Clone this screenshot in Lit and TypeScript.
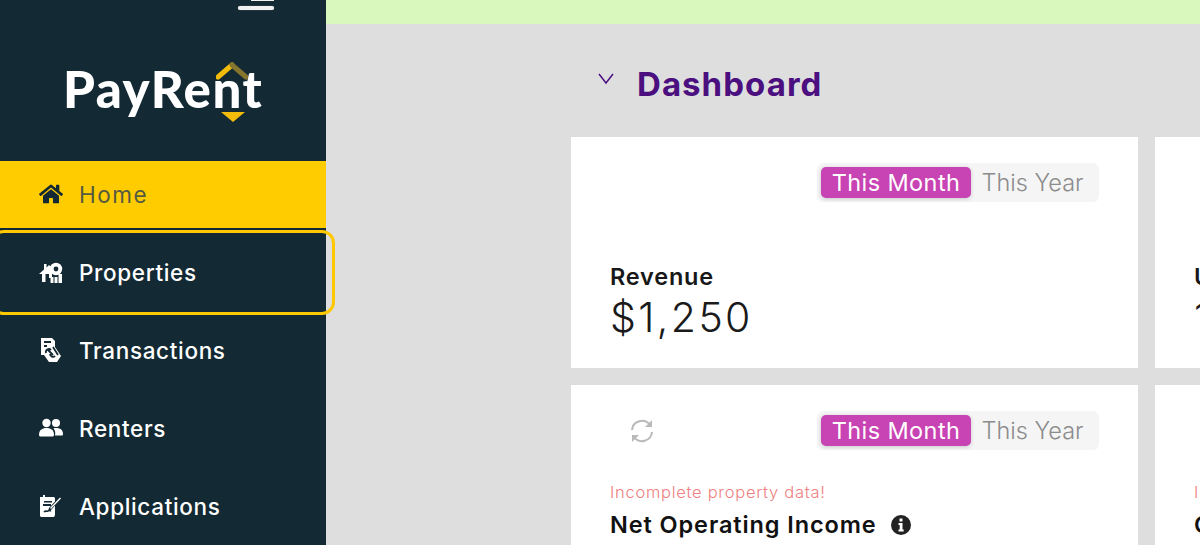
import { LitElement, html, css } from "lit";
import { customElement } from "lit/decorators.js";

const homeIcon = html`<svg class="ico" viewBox="0 0 576 512"><path fill="#132933" d="M280.37 148.26L96 300.11V464a16 16 0 0 0 16 16l112.06-.29a16 16 0 0 0 15.92-16V368a16 16 0 0 1 16-16h64a16 16 0 0 1 16 16v95.64a16 16 0 0 0 16 16.05L464 480a16 16 0 0 0 16-16V300L295.67 148.26a12.19 12.19 0 0 0-15.3 0zM571.6 251.47L488 182.56V44.05a12 12 0 0 0-12-12h-56a12 12 0 0 0-12 12v72.61L318.47 43a48 48 0 0 0-61 0L4.34 251.47a12 12 0 0 0-1.6 16.9l25.5 31A12 12 0 0 0 45.15 301l235.22-193.74a12.19 12.19 0 0 1 15.3 0L530.9 301a12 12 0 0 0 16.9-1.6l25.5-31a12 12 0 0 0-1.7-16.93z"/></svg>`;
const propIcon = html`<svg class="ico" viewBox="0 0 24 24"><path fill="#fff" d="M0 14 L5 9.500 V4 h2.500 v3.500 L10 5 l3 3 v10 H10 v-4 H6.500 v8 H3 v-8 H0z"/><circle cx="17" cy="9" r="6.200" fill="#fff"/><circle cx="17" cy="9" r="2.400" fill="#132933"/><path fill="#fff" d="M11.500 17h3v6h-3zM15.500 17h3v6h-3zM19.500 14h3.500v9h-3.500z"/></svg>`;
const txIcon = html`<svg class="ico" viewBox="0 0 24 24"><path fill="#fff" d="M2 0 h11 l3 3 v6 l6 9 -4 6 H10 L5 17 H2z"/><path fill="none" stroke="#132933" stroke-width="1.800" d="M5 4h7M5 8h3M9 12l5 5M7 15a3 3 0 0 1 5-3M16 18a3 3 0 0 1-5-2M14 9l5 8"/></svg>`;
const usersIcon = html`<svg class="ico" viewBox="0 0 24 24"><circle cx="7.500" cy="7" r="4.200" fill="#fff"/><circle cx="17" cy="7" r="4" fill="#fff"/><path fill="#fff" d="M0 19c0-5 3-7 7.500-7s7.500 2 7.500 7c0 1-1 1.500-2 1.500H2c-1 0-2-.5-2-1.500z"/><path fill="#fff" d="M16 19.500h7c.6 0 1-.5 1-1.500 0-4-2.500-6-7-6-1 0-2 .1-2.600.5 1.600 1.500 2.300 3.800 1.600 7z"/></svg>`;
const appIcon = html`<svg class="ico" viewBox="0 0 24 24"><path fill="#fff" d="M1 3h3V1h2v2h9l1 1v17l-1 2H2l-1-1z"/><path fill="#132933" d="M5 7h8v1.500H5zM4 10h8v2H4z"/><path fill="none" stroke="#132933" stroke-width="1.600" d="M5 18c2-2 3 0 4-1s2 0 3-.5"/><path fill="#132933" d="M21 2 l2 2 -11 12 -3 1 1 -3z"/><path fill="#fff" d="M21 3.500 l1 1 -10 10.500 -1 -1z"/></svg>`;

@customElement("app-root")
export class AppRoot extends LitElement {
  static styles = css`
    :host { display: flex; width: 1200px; height: 545px; overflow: hidden; background: #dedede; font-family: Inter, "Liberation Sans", sans-serif; }
    .side { width: 326px; flex: none; background: #132933; display: flex; flex-direction: column; }
    .burger { height: 45px; padding-right: 52px; display: flex; flex-direction: column; align-items: flex-end; gap: 5px; }
    .burger i { display: block; background: #f2f2f2; }
    .b1 { width: 23px; height: 1px; }
    .b2 { width: 36px; height: 4px; border-radius: 2px; box-shadow: 0 0 1px #9aa; }
    .logo-wrap { height: 116px; padding-left: 63px; }
    .logo { position: relative; display: inline-block; margin-top: 14px; font: 900 51px/60px Lato, sans-serif; color: #fff; letter-spacing: 1.500px; white-space: nowrap; }
    .roof { position: absolute; left: 153px; top: 3px; width: 32px; height: 18px; }
    .tri { position: absolute; left: 158px; top: 53px; width: 24px; height: 10px; }
    nav { display: flex; flex-direction: column; gap: 11px; }
    .item { height: 67px; display: flex; align-items: center; gap: 16px; padding: 0 0 1px 39px; box-sizing: border-box; color: #fff; font-size: 22.500px; letter-spacing: 0.650px; font-weight: 500; }
    .item.active { background: #ffcc00; color: #555a40; font-weight: 400; letter-spacing: 1.500px; }
    .item.focus { outline: 3px solid #ffc800; outline-offset: 6px; border-radius: 4px; }
    .ico { width: 24px; height: 24px; flex: none; }
    .main { flex: 1; min-width: 0; display: flex; flex-direction: column; overflow: hidden; }
    .banner { height: 24px; background: #d9f8bd; flex: none; }
    .content { padding: 0 0 0 245px; }
    .head { height: 113px; display: flex; align-items: center; gap: 22px; padding: 6px 0 0 26px; box-sizing: border-box; }
    .chev { width: 18px; height: 14px; margin-top: -10px; }
    h1 { margin: 0; font-size: 33px; font-weight: 700; color: #4b0f80; letter-spacing: 1.050px; }
    .grid { display: grid; grid-template-columns: 567px 567px; grid-auto-rows: 231px; gap: 17px; width: 1151px; }
    .card { background: #fff; padding: 26px 39px 0; box-sizing: border-box; display: flex; flex-direction: column; overflow: hidden; }
    .top { display: flex; align-items: center; justify-content: space-between; height: 39px; flex: none; }
    .refresh { width: 26px; height: 26px; margin-left: 19px; }
    .toggle { margin-left: auto; width: 282px; height: 39px; box-sizing: border-box; padding: 4px; background: #f5f5f5; border-radius: 6px; display: flex; align-items: center; font-size: 23.500px; }
    .toggle b { font-weight: 400; width: 150px; height: 31px; line-height: 32px; text-align: center; background: #c843b3; color: #fff; border-radius: 5px; box-shadow: 0 1px 4px rgba(0,0,0,.18); flex: none; letter-spacing: 0.400px; }
    .toggle span { color: #8c8c8c; font-weight: 300; flex: 1; text-align: center; padding-right: 1px; }
    .label { margin-top: 59px; font-size: 23.500px; font-weight: 600; line-height: 32px; color: #181818; letter-spacing: 0.800px; white-space: nowrap; }
    .value { font-size: 41px; font-weight: 300; line-height: 49px; color: #1a1a1a; letter-spacing: 2.400px; white-space: nowrap; }
    .warn { margin-top: 32px; font-size: 16.500px; line-height: 20px; color: #ee8080; font-weight: 300; letter-spacing: 0.720px; white-space: nowrap; }
    .noi { margin-top: 8px; display: flex; align-items: center; gap: 14px; font-size: 23.500px; font-weight: 600; line-height: 30px; color: #111; letter-spacing: 0.900px; white-space: nowrap; }
    .info { width: 20px; height: 20px; flex: none; }
  `;

  private toggle() {
    return html`<div class="toggle"><b>This Month</b><span>This Year</span></div>`;
  }

  render() {
    return html`
      <aside class="side">
        <div class="burger"><i class="b1"></i><i class="b2"></i></div>
        <div class="logo-wrap">
          <div class="logo">PayRent
            <svg class="roof" viewBox="0 0 32 18"><path d="M2 15 L16 3" stroke="#f2bd0a" stroke-width="5" stroke-linecap="round" fill="none"/><path d="M16 3 L30 15" stroke="#85752f" stroke-width="5" stroke-linecap="round" fill="none"/></svg>
            <svg class="tri" viewBox="0 0 24 10"><path d="M0 0H24L12 10z" fill="#f2bd0a"/></svg>
          </div>
        </div>
        <nav>
          <div class="item active">${homeIcon}Home</div>
          <div class="item focus">${propIcon}Properties</div>
          <div class="item">${txIcon}Transactions</div>
          <div class="item">${usersIcon}Renters</div>
          <div class="item">${appIcon}Applications</div>
        </nav>
      </aside>
      <div class="main">
        <div class="banner"></div>
        <div class="content">
          <div class="head">
            <svg class="chev" viewBox="0 0 18 14"><path d="M2 2 L9 11 L16 2" fill="none" stroke="#4b0f80" stroke-width="1.500"/></svg>
            <h1>Dashboard</h1>
          </div>
          <div class="grid">
            <div class="card">
              <div class="top">${this.toggle()}</div>
              <div class="label">Revenue</div>
              <div class="value">$1,250</div>
            </div>
            <div class="card">
              <div class="top">${this.toggle()}</div>
              <div class="label">Unpaid Rent</div>
              <div class="value">1</div>
            </div>
            <div class="card">
              <div class="top">
                <svg class="refresh" viewBox="0 0 26 26"><g fill="none" stroke="#b9b9b9" stroke-width="2"><path d="M3 12a10 10 0 0 1 18-5"/><path d="M23 14a10 10 0 0 1-18 5"/></g><path fill="#b9b9b9" d="M23 2v7h-7zM3 24v-7h7z"/></svg>
                ${this.toggle()}
              </div>
              <div class="warn">Incomplete property data!</div>
              <div class="noi">Net Operating Income
                <svg class="info" viewBox="0 0 20 20"><circle cx="10" cy="10" r="10" fill="#222"/><path fill="#fff" d="M8.500 3.500h3v3h-3zM7.500 8h4v6.500h1.200V16.500H7.500v-2h1.200V10H7.500z"/></svg>
              </div>
            </div>
            <div class="card">
              <div class="top">${this.toggle()}</div>
              <div class="warn">Incomplete property data!</div>
              <div class="noi">Cash Flow</div>
            </div>
          </div>
        </div>
      </div>
    `;
  }
}
